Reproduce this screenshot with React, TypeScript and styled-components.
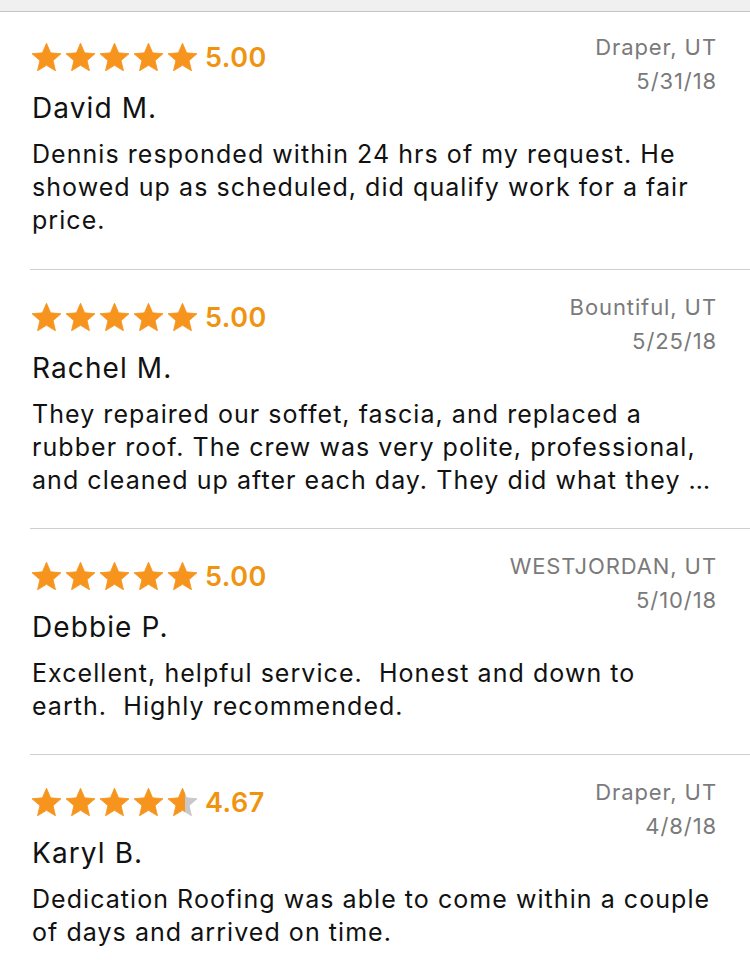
import React from 'react'
import styled, { createGlobalStyle } from 'styled-components'

const GlobalStyle = createGlobalStyle`
  html, body {
    margin: 0;
    padding: 0;
    background: #ffffff;
  }
  body {
    font-family: Inter, "Noto Sans", "Liberation Sans", sans-serif;
    -webkit-font-smoothing: antialiased;
  }
`

type Review = {
  rating: number
  name: string
  location: string
  date: string
  text: string
}

const reviews: Review[] = [
  {
    rating: 5,
    name: 'David M.',
    location: 'Draper, UT',
    date: '5/31/18',
    text: 'Dennis responded within 24 hrs of my request. He showed up as scheduled, did qualify work for a fair price.',
  },
  {
    rating: 5,
    name: 'Rachel M.',
    location: 'Bountiful, UT',
    date: '5/25/18',
    text: 'They repaired our soffet, fascia, and replaced a rubber roof. The crew was very polite, professional, and cleaned up after each day. They did what they said they would do and the price was fair.',
  },
  {
    rating: 5,
    name: 'Debbie P.',
    location: 'WESTJORDAN, UT',
    date: '5/10/18',
    text: 'Excellent, helpful service.  Honest and down to earth.  Highly recommended.',
  },
  {
    rating: 4.67,
    name: 'Karyl B.',
    location: 'Draper, UT',
    date: '4/8/18',
    text: 'Dedication Roofing was able to come within a couple of days and arrived on time.',
  },
]

const TopBar = styled.div`
  height: 11px;
  background: #f0f0f0;
  border-bottom: 1px solid #c4c4c4;
`

const List = styled.div`
  padding-left: 30px;
`

const Card = styled.div<{ $last?: boolean }>`
  padding: 20px 33px 31px 2px;
  border-bottom: ${(p) => (p.$last ? 'none' : '1px solid #cfcfcf')};

  &:first-child {
    padding-top: 18px;
    padding-bottom: 32px;
  }
`

const Header = styled.div`
  display: flex;
  justify-content: space-between;
  align-items: flex-start;
`

const LeftCol = styled.div`
  display: flex;
  flex-direction: column;
`

const RatingRow = styled.div`
  display: flex;
  align-items: center;
  height: 34px;
  margin-top: 10px;
`

const Stars = styled.div`
  display: flex;
  gap: 5px;
`

const Score = styled.span`
  margin-left: 8px;
  font-size: 27px;
  font-weight: 600;
  letter-spacing: 0.5px;
  color: #f0940f;
`

const Name = styled.div`
  margin-top: 17px;
  font-size: 28px;
  line-height: 34px;
  letter-spacing: 1.1px;
  color: #111111;
`

const Meta = styled.div`
  text-align: right;
  font-size: 22px;
  line-height: 34px;
  letter-spacing: 0.9px;
  color: #7a7a7a;
`

const Body = styled.div`
  margin-top: 13px;
  font-size: 25px;
  line-height: 33px;
  letter-spacing: 1.05px;
  color: #111111;
  white-space: pre-wrap;
  display: -webkit-box;
  -webkit-line-clamp: 3;
  -webkit-box-orient: vertical;
  overflow: hidden;
`

const STAR_PATH =
  'M12 17.27L18.18 21l-1.64-7.03L22 9.24l-7.19-.61L12 2 9.19 8.63 2 9.24l5.46 4.73L5.82 21z'

const Star: React.FC<{ fill: number; id: string }> = ({ fill, id }) => (
  <svg width="29" height="28" viewBox="2 2 20 19">
    <defs>
      <linearGradient id={id} x1="0" x2="1" y1="0" y2="0">
        <stop offset={fill} stopColor="#f7941d" />
        <stop offset={fill} stopColor="#c7c7cc" />
      </linearGradient>
    </defs>
    <path d={STAR_PATH} fill={`url(#${id})`} stroke={`url(#${id})`} strokeWidth="0.6" strokeLinejoin="round" />
  </svg>
)

const ReviewCard: React.FC<{ review: Review; index: number; last: boolean }> = ({ review, index, last }) => {
  return (
    <Card $last={last}>
      <Header>
        <LeftCol>
          <RatingRow>
            <Stars>
              {[0, 1, 2, 3, 4].map((i) => {
                const f = Math.max(0, Math.min(1, review.rating - i))
                const shown = f >= 1 ? 1 : f > 0 ? 0.6 : 0
                return <Star key={i} fill={shown} id={`star-${index}-${i}`} />
              })}
            </Stars>
            <Score>{review.rating.toFixed(2)}</Score>
          </RatingRow>
          <Name>{review.name}</Name>
        </LeftCol>
        <Meta>
          <div>{review.location}</div>
          <div>{review.date}</div>
        </Meta>
      </Header>
      <Body>{review.text}</Body>
    </Card>
  )
}

const App: React.FC = () => {
  return (
    <>
      <GlobalStyle />
      <TopBar />
      <List>
        {reviews.map((r, i) => (
          <ReviewCard key={r.name} review={r} index={i} last={i === reviews.length - 1} />
        ))}
      </List>
    </>
  )
}

export default App
